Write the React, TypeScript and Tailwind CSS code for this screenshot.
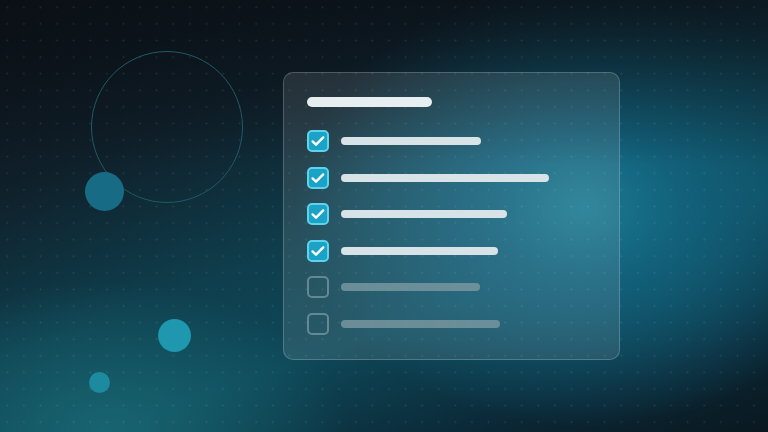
const rows = [
  { checked: true, w: 140 },
  { checked: true, w: 208 },
  { checked: true, w: 166 },
  { checked: true, w: 157 },
  { checked: false, w: 139 },
  { checked: false, w: 159 },
];

function Checkbox({ checked }: { checked: boolean }) {
  if (!checked) {
    return <div className="w-[22px] h-[22px] rounded-[5px] border-2 border-[#7f9ea5]/70 shrink-0" />;
  }
  return (
    <div className="w-[22px] h-[22px] rounded-[5px] border-2 border-[#5fd3ec] bg-[#1aa3c6] shrink-0 flex items-center justify-center">
      <svg width="16" height="16" viewBox="0 0 16 16" fill="none">
        <path d="M2.6 8.4l3.4 3.3L13.2 4.4" stroke="white" strokeWidth="2.4" strokeLinecap="round" strokeLinejoin="round" />
      </svg>
    </div>
  );
}

export default function App() {
  return (
    <div className="relative w-[768px] h-[432px] overflow-hidden bg-[linear-gradient(180deg,rgba(10,16,22,0.7)_0%,rgba(10,16,22,0)_38%),radial-gradient(ellipse_290px_220px_at_76%_48%,#1b7a91_0%,#12607a_35%,rgba(14,80,100,0)_100%),radial-gradient(ellipse_240px_150px_at_14%_100%,#186470_0%,rgba(20,90,100,0)_100%),linear-gradient(160deg,#0c0f15_0%,#0f1f29_26%,#0f3e4d_50%,#0e4859_66%,#0b2634_86%,#0a1820_100%)]">
      {/* dot grid */}
      <div className="absolute inset-0 bg-[radial-gradient(rgba(255,255,255,0.09)_0.8px,transparent_1.2px)] bg-[size:16.6px_16.6px] bg-[position:-1px_-1px]" />

      {/* decorative circles */}
      <div className="absolute left-[91px] top-[51px] w-[152px] h-[152px] rounded-full border border-[#1f5a66]" />
      <div className="absolute left-[85px] top-[172px] w-[39px] h-[39px] rounded-full bg-[#186b84]" />
      <div className="absolute left-[158px] top-[319px] w-[33px] h-[33px] rounded-full bg-[#1f97ae]" />
      <div className="absolute left-[89px] top-[372px] w-[21px] h-[21px] rounded-full bg-[#1c8a9f]" />

      {/* checklist card */}
      <div className="relative pl-[283px] pt-[72px]">
        <div className="w-[337px] h-[288px] rounded-[10px] border border-white/20 bg-white/[0.1] pl-[23px] pt-[24px] flex flex-col">
          <div className="w-[125px] h-[10px] rounded-full bg-[#e6eef0]" />
          <div className="mt-[23px] flex flex-col gap-[14.6px]">
            {rows.map((r, i) => (
              <div key={i} className="flex items-center gap-[12px]">
                <Checkbox checked={r.checked} />
                <div
                  className={r.checked ? 'h-[8px] rounded-full bg-[#d7e3e7]' : 'h-[8px] rounded-full bg-[#7c9aa2]/80'}
                  style={{ width: r.w }}
                />
              </div>
            ))}
          </div>
        </div>
      </div>
    </div>
  );
}
